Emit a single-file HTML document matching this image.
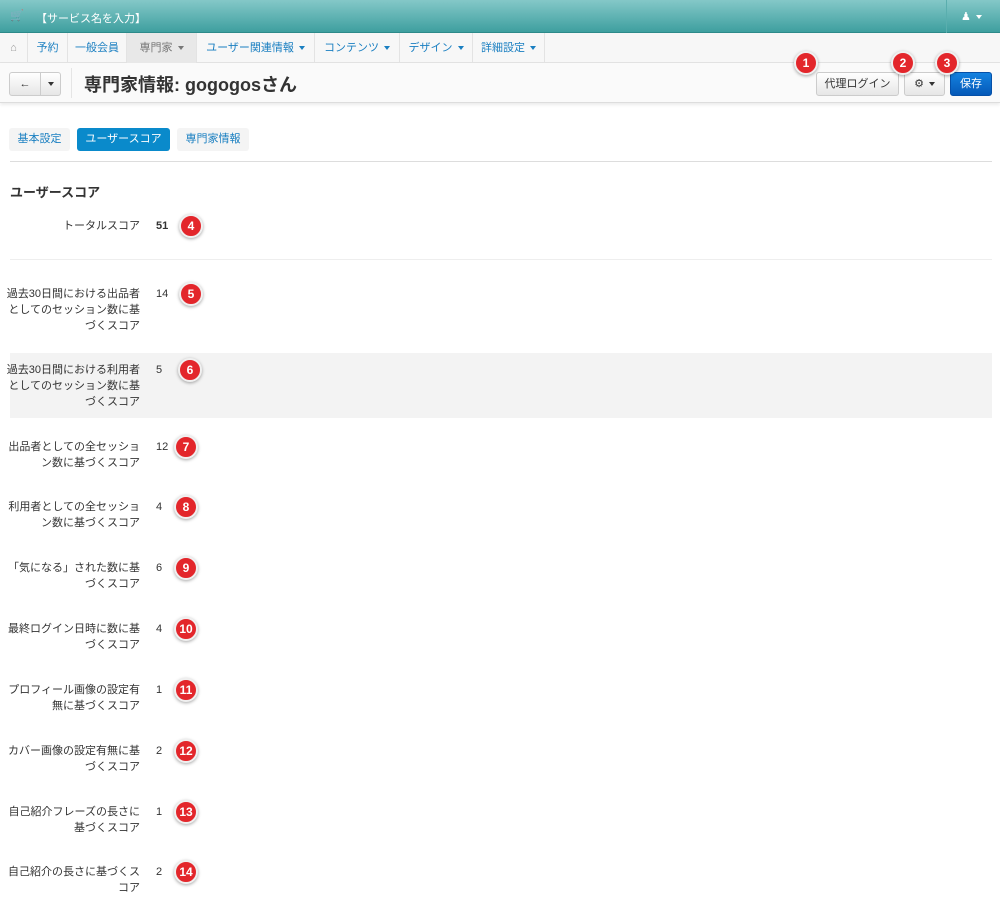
<!DOCTYPE html>
<html><head><meta charset="utf-8"><style>
*{box-sizing:border-box;margin:0;padding:0}
body{width:1000px;height:903px;position:relative;background:#fff;font-family:"Liberation Sans","Noto Sans CJK JP",sans-serif;color:#333;overflow:hidden}
.a{position:absolute}
.top{left:0;top:0;width:1000px;height:33px;background:linear-gradient(#84c8c8,#3e9f9f);border-bottom:1px solid #2d8a8a}
.nav{left:0;top:33px;width:1000px;height:30px;background:#f7f7f7;border-bottom:1px solid #e3e3e3}
.ni{position:absolute;top:0;height:30px;line-height:30px;font-size:11px;color:#1a7fc1;border-right:1px solid #e3e3e3;text-align:center}
.car{display:inline-block;width:0;height:0;border-left:3px solid transparent;border-right:3px solid transparent;border-top:4px solid currentColor;vertical-align:middle;margin-left:5px}
.bar{left:0;top:63px;width:1000px;height:40px;background:#fafafa;border-bottom:1px solid #ddd;box-shadow:0 2px 3px rgba(0,0,0,.08)}
.btn{position:absolute;border:1px solid #ccc;border-radius:3px;background:linear-gradient(#fff,#e6e6e6);font-size:11px;color:#333;text-align:center;line-height:22px}
.bd{position:absolute;width:24px;height:24px;border-radius:50%;background:#e3262b;border:2px solid #f0f0f0;box-shadow:0 1px 3px rgba(0,0,0,.35);color:#fff;font-size:12px;font-weight:bold;text-align:center;line-height:20px}
.tab{position:absolute;top:128px;height:23px;line-height:23px;font-size:11px;border-radius:3px;background:#f4f4f4;color:#1a7fc1;text-align:center}
.lb{position:absolute;left:6px;width:134px;text-align:right;font-size:11px;line-height:16px;color:#333}
.v{position:absolute;left:156px;font-size:11px;line-height:16px;color:#333}
</style></head><body>
<div class="a top"></div>
<div class="a" style="left:10px;top:9px;font-size:11px;color:#d8eeee">🛒</div>
<div class="a" style="left:36px;top:10px;font-size:11px;color:#fff">【サービス名を入力】</div>
<div class="a" style="left:946px;top:0;width:1px;height:33px;background:#5aaeae"></div>
<div class="a" style="left:961px;top:10px;font-size:11px;color:#fff">&#9823;<span class="car" style="color:#fff"></span></div>
<div class="a nav">
<div class="ni" style="left:0;width:28px;color:#999">⌂</div>
<div class="ni" style="left:28px;width:40px">予約</div>
<div class="ni" style="left:68px;width:59px">一般会員</div>
<div class="ni" style="left:127px;width:70px;background:#e8e8e8;color:#777">専門家<span class="car"></span></div>
<div class="ni" style="left:197px;width:118px">ユーザー関連情報<span class="car"></span></div>
<div class="ni" style="left:315px;width:85px">コンテンツ<span class="car"></span></div>
<div class="ni" style="left:400px;width:73px">デザイン<span class="car"></span></div>
<div class="ni" style="left:473px;width:72px">詳細設定<span class="car"></span></div>
</div>
<div class="a bar"></div>
<div class="btn" style="left:9px;top:72px;width:32px;height:24px;border-radius:3px 0 0 3px;font-weight:bold">&#8592;</div>
<div class="btn" style="left:40px;top:72px;width:21px;height:24px;border-radius:0 3px 3px 0"><span class="car" style="margin:0"></span></div>
<div class="a" style="left:71px;top:68px;width:1px;height:30px;background:#e5e5e5"></div>
<div class="a" style="left:84px;top:71px;font-size:18px;font-weight:bold;color:#333">専門家情報: gogogosさん</div>
<div class="btn" style="left:816px;top:72px;width:83px;height:24px">代理ログイン</div>
<div class="btn" style="left:904px;top:72px;width:41px;height:24px">⚙<span class="car"></span></div>
<div class="btn" style="left:950px;top:72px;width:42px;height:24px;background:linear-gradient(#1482e0,#0559b8);border-color:#0550a8;color:#fff">保存</div>
<div class="bd" style="left:794px;top:51px">1</div>
<div class="bd" style="left:891px;top:51px">2</div>
<div class="bd" style="left:935px;top:51px">3</div>
<div class="tab" style="left:9px;width:61px">基本設定</div>
<div class="tab" style="left:77px;width:93px;background:#0a8acb;color:#fff">ユーザースコア</div>
<div class="tab" style="left:177px;width:72px">専門家情報</div>
<div class="a" style="left:10px;top:161px;width:982px;height:1px;background:#ddd"></div>
<div class="a" style="left:10px;top:182px;font-size:13px;font-weight:bold;color:#333">ユーザースコア</div>
<div class="lb" style="top:218px">トータルスコア</div><div class="v" style="top:218px;font-weight:bold">51</div><div class="bd" style="left:179px;top:214px">4</div>
<div class="a" style="left:10px;top:259px;width:982px;height:1px;background:#eee"></div>
<div class="lb" style="top:286px">過去30日間における出品者としてのセッション数に基づくスコア</div><div class="v" style="top:286px">14</div><div class="bd" style="left:179px;top:282px">5</div>
<div class="a" style="left:10px;top:353px;width:982px;height:65px;background:#f3f3f3"></div>
<div class="lb" style="top:362px">過去30日間における利用者としてのセッション数に基づくスコア</div><div class="v" style="top:362px">5</div><div class="bd" style="left:178px;top:358px">6</div>
<div class="lb" style="top:439px">出品者としての全セッション数に基づくスコア</div><div class="v" style="top:439px">12</div><div class="bd" style="left:174px;top:435px">7</div>
<div class="lb" style="top:499px">利用者としての全セッション数に基づくスコア</div><div class="v" style="top:499px">4</div><div class="bd" style="left:174px;top:495px">8</div>
<div class="lb" style="top:560px">「気になる」された数に基づくスコア</div><div class="v" style="top:560px">6</div><div class="bd" style="left:174px;top:556px">9</div>
<div class="lb" style="top:621px">最終ログイン日時に数に基づくスコア</div><div class="v" style="top:621px">4</div><div class="bd" style="left:174px;top:617px">10</div>
<div class="lb" style="top:682px">プロフィール画像の設定有無に基づくスコア</div><div class="v" style="top:682px">1</div><div class="bd" style="left:174px;top:678px">11</div>
<div class="lb" style="top:743px">カバー画像の設定有無に基づくスコア</div><div class="v" style="top:743px">2</div><div class="bd" style="left:174px;top:739px">12</div>
<div class="lb" style="top:804px">自己紹介フレーズの長さに基づくスコア</div><div class="v" style="top:804px">1</div><div class="bd" style="left:174px;top:800px">13</div>
<div class="lb" style="top:864px">自己紹介の長さに基づくスコア</div><div class="v" style="top:864px">2</div><div class="bd" style="left:174px;top:860px">14</div>
</body></html>
